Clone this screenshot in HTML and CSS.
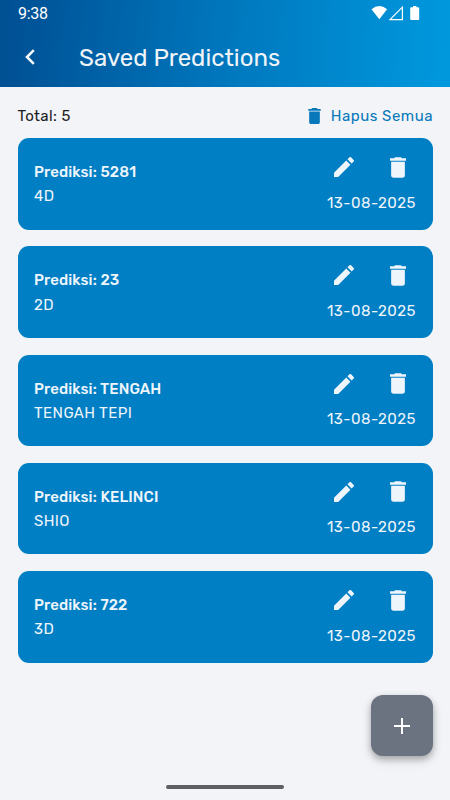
FILE: index.html
```
<!DOCTYPE html>
<html lang="id">
<head>
<meta charset="utf-8">
<title>Saved Predictions</title>
<link rel="stylesheet" href="styles.css">
</head>
<body>
<svg class="defs" aria-hidden="true">
  <symbol id="trash" viewBox="5 3 14 18"><path d="M6 19c0 1.100.9 2 2 2h8c1.100 0 2-.9 2-2V7H6v12zM19 4h-3.500l-1-1h-5l-1 1H5v2h14V4z"/></symbol>
  <symbol id="pencil" viewBox="3 3 18 18"><path d="M3 17.250V21h3.750L17.810 9.940l-3.750-3.750L3 17.250zM20.710 7.040c.39-.39.39-1.020 0-1.410l-2.340-2.340c-.39-.39-1.020-.39-1.410 0l-1.830 1.830 3.750 3.750 1.830-1.830z"/></symbol>
</svg>
<header class="header">
  <div class="status">
    <span class="time">9:38</span>
    <svg class="status-icons" viewBox="0 0 50 16">
      <path d="M.5 3.200Q8.300-3.200 16.100 3.200L8.300 13.300Z"/>
      <path class="signal" d="M19 13.600H31.400V1.200Z"/>
      <path d="M42 0h3.400v1.200h1.900q.9 0 .9.900v11q0 .9-.9.900h-7.200q-.9 0-.9-.9v-11q0-.9.9-.9h1.900z"/>
    </svg>
  </div>
  <div class="appbar">
    <svg class="back" viewBox="0 0 10 16"><path d="M8.800 1.200 2 8l6.800 6.800"/></svg>
    <h1 class="title">Saved Predictions</h1>
  </div>
</header>
<main class="content">
  <div class="toolbar">
    <span class="total">Total: 5</span>
    <span class="clear"><svg class="clear-icon"><use href="#trash"/></svg><span class="clear-label">Hapus Semua</span></span>
  </div>
  <div class="list">
    <article class="card"><div class="info"><div class="name">Prediksi: 5281</div><div class="kind">4D</div></div><div class="side"><div class="actions"><svg class="edit"><use href="#pencil"/></svg><svg class="delete"><use href="#trash"/></svg></div><div class="date">13-08-2025</div></div></article>
    <article class="card"><div class="info"><div class="name">Prediksi: 23</div><div class="kind">2D</div></div><div class="side"><div class="actions"><svg class="edit"><use href="#pencil"/></svg><svg class="delete"><use href="#trash"/></svg></div><div class="date">13-08-2025</div></div></article>
    <article class="card"><div class="info"><div class="name">Prediksi: TENGAH</div><div class="kind">TENGAH TEPI</div></div><div class="side"><div class="actions"><svg class="edit"><use href="#pencil"/></svg><svg class="delete"><use href="#trash"/></svg></div><div class="date">13-08-2025</div></div></article>
    <article class="card"><div class="info"><div class="name">Prediksi: KELINCI</div><div class="kind">SHIO</div></div><div class="side"><div class="actions"><svg class="edit"><use href="#pencil"/></svg><svg class="delete"><use href="#trash"/></svg></div><div class="date">13-08-2025</div></div></article>
    <article class="card"><div class="info"><div class="name">Prediksi: 722</div><div class="kind">3D</div></div><div class="side"><div class="actions"><svg class="edit"><use href="#pencil"/></svg><svg class="delete"><use href="#trash"/></svg></div><div class="date">13-08-2025</div></div></article>
  </div>
</main>
<div class="fab"><svg class="plus" viewBox="0 0 16 16"><path d="M8 0v16M0 8h16"/></svg></div>
<div class="home-bar"></div>
</body>
</html>
```
FILE: styles.css
```
* { box-sizing: border-box; }
body {
  margin: 0;
  height: 800px;
  position: relative;
  overflow: hidden;
  background: #f2f4f7;
  color: #1b1c1f;
  font-family: Rubik, Roboto, sans-serif;
  font-size: 15px;
}
svg { display: block; fill: currentColor; }
.defs { position: absolute; width: 0; height: 0; }
.header {
  height: 87px;
  background: linear-gradient(93deg, #005094 2%, #0077bd 50%, #0098dd 99%);
  color: #fff;
}
.status {
  height: 28px;
  padding: 0 31px 1px 18px;
  display: flex;
  align-items: center;
  justify-content: space-between;
}
.time { font-family: Roboto, sans-serif; font-size: 16px; line-height: 26px; letter-spacing: -.3px; }
.status-icons { width: 50px; height: 16px; margin: 1px -2px 0 0; }
.signal { fill: none; stroke: #fff; stroke-width: 1.200; }
.appbar { height: 59px; display: flex; align-items: center; padding-left: 25px; }
.back { width: 10px; height: 16px; margin-top: -1px; fill: none; stroke: #f4f7fa; stroke-width: 2.600; }
.title { margin: 0 0 0 44px; font-size: 24px; font-weight: 400; line-height: 30px; color: #f0f4f8; }
.content { padding: 0 17.500px; }
.toolbar { height: 51px; padding-top: 7px; display: flex; align-items: center; justify-content: space-between; }
.total { letter-spacing: .4px; }
.clear { display: flex; align-items: center; color: #0878bb; }
.clear-icon { width: 13px; height: 16px; margin-right: 10px; }
.clear-label { letter-spacing: .5px; margin-right: -.5px; }
.list { display: grid; gap: 16.700px; }
.card {
  height: 91.600px;
  padding: 17px 17px 17px 16.500px;
  display: flex;
  justify-content: space-between;
  border-radius: 11px;
  background: #007fc4;
  color: #eef5fb;
}
.info { padding-top: 5px; line-height: 24.300px; }
.name { font-weight: 500; letter-spacing: .1px; }
.kind { letter-spacing: .4px; }
.side { display: flex; flex-direction: column; align-items: flex-end; }
.actions { display: flex; align-items: center; gap: 36px; height: 24px; margin: 1.500px 9.500px 0 0; }
.edit { width: 20px; height: 20px; }
.delete { width: 16px; height: 21px; }
.date { margin-top: 13px; line-height: 24px; letter-spacing: .45px; margin-right: -.45px; }
.fab {
  position: absolute;
  left: 371px;
  top: 695px;
  width: 62px;
  height: 61px;
  border-radius: 12px;
  background: #6b7280;
  display: grid;
  place-items: center;
  box-shadow: 0 3px 6px rgba(0, 0, 0, .25), 0 5px 12px rgba(0, 0, 0, .12);
}
.plus { width: 16px; height: 16px; stroke: #fff; stroke-width: 2; }
.home-bar { position: absolute; left: 166px; top: 785px; width: 118px; height: 4px; border-radius: 2px; background: #5d5f61; }
```
